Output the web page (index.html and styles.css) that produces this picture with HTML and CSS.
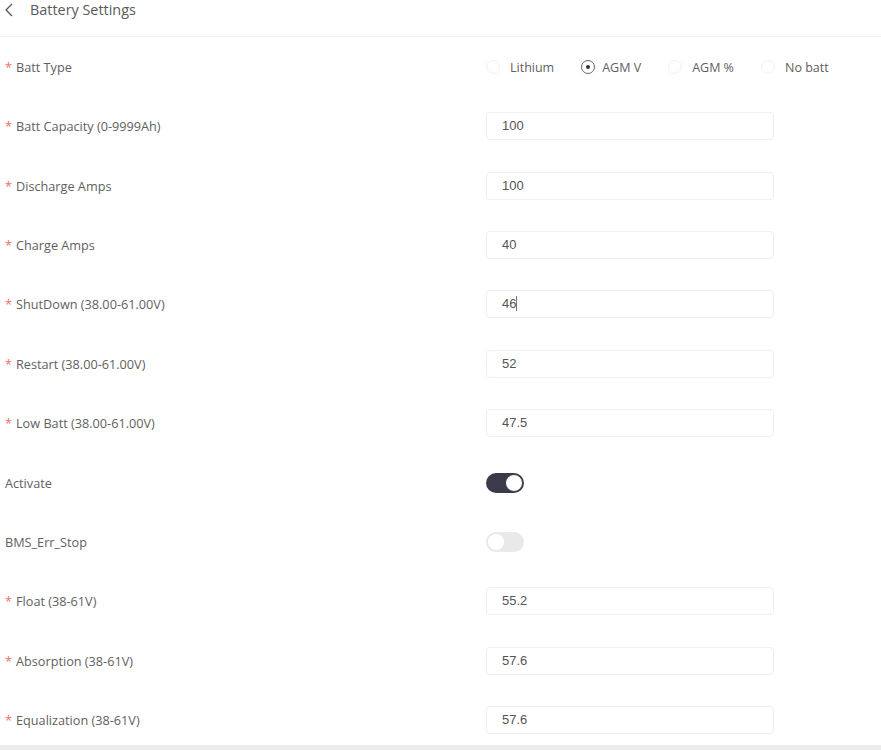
FILE: index.html
```html
<!DOCTYPE html>
<html lang="en">
<head>
    <meta charset="UTF-8">
    <meta name="viewport" content="width=device-width, initial-scale=1.0">
    <title>Battery Settings</title>
    <link rel="stylesheet" href="styles.css">
</head>
<body>
    <div class="page">
        <header class="header">
            <svg class="back" width="12" height="16" viewBox="0 0 12 16" aria-hidden="true">
                <polyline points="9,2 3,8 9,14" fill="none" stroke="#555" stroke-width="1.3"/>
            </svg>
            <h1 class="title">Battery Settings</h1>
        </header>

        <form class="form">
            <div class="row">
                <label class="label required">Batt Type</label>
                <div class="control radios">
                    <span class="radio"><span class="dot"></span>Lithium</span>
                    <span class="radio checked"><span class="dot"></span>AGM V</span>
                    <span class="radio"><span class="dot"></span>AGM %</span>
                    <span class="radio"><span class="dot"></span>No batt</span>
                </div>
            </div>
            <div class="row">
                <label class="label required">Batt Capacity (0-9999Ah)</label>
                <div class="control"><div class="field">100</div></div>
            </div>
            <div class="row">
                <label class="label required">Discharge Amps</label>
                <div class="control"><div class="field">100</div></div>
            </div>
            <div class="row">
                <label class="label required">Charge Amps</label>
                <div class="control"><div class="field">40</div></div>
            </div>
            <div class="row">
                <label class="label required">ShutDown (38.00-61.00V)</label>
                <div class="control"><div class="field">46<span class="caret"></span></div></div>
            </div>
            <div class="row">
                <label class="label required">Restart (38.00-61.00V)</label>
                <div class="control"><div class="field">52</div></div>
            </div>
            <div class="row">
                <label class="label required">Low Batt (38.00-61.00V)</label>
                <div class="control"><div class="field">47.5</div></div>
            </div>
            <div class="row">
                <label class="label">Activate</label>
                <div class="control"><span class="switch on"></span></div>
            </div>
            <div class="row">
                <label class="label">BMS_Err_Stop</label>
                <div class="control"><span class="switch"></span></div>
            </div>
            <div class="row">
                <label class="label required">Float (38-61V)</label>
                <div class="control"><div class="field">55.2</div></div>
            </div>
            <div class="row">
                <label class="label required">Absorption (38-61V)</label>
                <div class="control"><div class="field">57.6</div></div>
            </div>
            <div class="row">
                <label class="label required">Equalization (38-61V)</label>
                <div class="control"><div class="field">57.6</div></div>
            </div>
        </form>
    </div>
</body>
</html>
```

FILE: styles.css
```css
body {
    margin: 0;
    background: #ededed;
    font-family: "Open Sans", "Noto Sans", sans-serif;
    color: #5a5a5a;
}

.page {
    background: #ffffff;
    height: 745px;
    overflow: hidden;
}

.header {
    display: flex;
    align-items: flex-start;
    height: 36px;
    border-bottom: 1px solid #eeeeee;
}

.back {
    margin: 2px 0 0 3px;
}

.title {
    margin: 0 0 0 15px;
    font-size: 14.4px;
    font-weight: normal;
    line-height: 20px;
    color: #5a5a5a;
}

.form {
    display: flex;
    flex-direction: column;
    gap: 9.36px;
    padding-top: 5px;
}

.row {
    display: flex;
    align-items: center;
    height: 50px;
}

.label {
    box-sizing: border-box;
    width: 486px;
    padding-left: 5px;
    font-size: 12.7px;
    color: #5f5f5f;
}

.label.required::before {
    content: "*";
    color: #f56c6c;
    margin-right: 4px;
}

.control {
    width: 288px;
}

.field {
    box-sizing: border-box;
    height: 28px;
    padding-left: 15px;
    border: 1px solid #efefef;
    border-radius: 4px;
    font-family: "Liberation Sans", Arial, sans-serif;
    font-size: 13px;
    line-height: 26px;
    color: #555;
}

.caret {
    display: inline-block;
    width: 1px;
    height: 15px;
    background: #777;
    vertical-align: -3px;
}

.radios {
    display: flex;
    align-items: center;
    width: auto;
    font-size: 12.5px;
}

.radio {
    display: inline-flex;
    align-items: center;
    margin-right: 27px;
    color: #5f5f5f;
}

.radio .dot {
    box-sizing: border-box;
    width: 14px;
    height: 14px;
    margin-right: 10px;
    border: 1px solid #f0f0f0;
    border-radius: 50%;
    display: inline-flex;
    align-items: center;
    justify-content: center;
}

.radio.checked .dot {
    border-color: #666;
    margin-right: 7px;
}

.radio.checked .dot::after {
    content: "";
    width: 4px;
    height: 4px;
    border-radius: 50%;
    background: #333;
}

.switch {
    display: block;
    box-sizing: border-box;
    width: 38px;
    height: 20px;
    border-radius: 10px;
    background: #e9e9e9;
    padding: 2px;
}

.switch::after {
    content: "";
    display: block;
    width: 16px;
    height: 16px;
    border-radius: 50%;
    background: #fff;
}

.switch.on {
    background: #3b3a4a;
    padding: 1px;
}

.switch.on::after {
    width: 18px;
    height: 18px;
    box-sizing: border-box;
    border: 1px solid #3b3a4a;
    margin-left: auto;
}
```
